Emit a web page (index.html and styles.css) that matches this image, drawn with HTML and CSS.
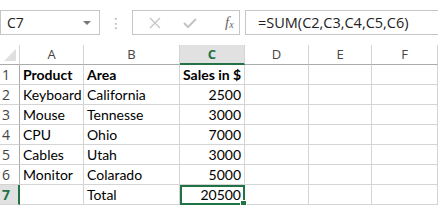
FILE: index.html
```html
<!DOCTYPE html>
<html lang="en">
<head>
<meta charset="UTF-8" />
<title>Sheet</title>
<link rel="stylesheet" href="styles.css">
</head>
<body>

<div class="toolbar">
  <div class="namebox">C7<span class="arrow"></span></div>
  <div class="grip">&#8942;</div>
  <div class="fbuttons">
    <svg class="ico" width="14" height="14" viewBox="0 0 14 14"><path d="M2 2 L12 12 M12 2 L2 12" stroke="#c4c4c4" stroke-width="1.3" fill="none"/></svg>
    <svg class="ico" width="16" height="14" viewBox="0 0 16 14"><path d="M2 7 L6 11 L14 3" stroke="#c4c4c4" stroke-width="2" fill="none"/></svg>
    <span class="fx">f<sub>x</sub></span>
  </div>
  <div class="formula">=SUM(C2,C3,C4,C5,C6)</div>
</div>

<div class="sheet">
  <div class="corner"><span class="tri"></span></div>
  <div class="colhead">A</div>
  <div class="colhead">B</div>
  <div class="colhead active">C</div>
  <div class="colhead">D</div>
  <div class="colhead">E</div>
  <div class="colhead">F</div>

  <div class="rowhead">1</div>
  <div class="cell bold">Product</div>
  <div class="cell bold">Area</div>
  <div class="cell bold">Sales in $</div>
  <div class="cell"></div><div class="cell"></div><div class="cell"></div>

  <div class="rowhead">2</div>
  <div class="cell">Keyboard</div>
  <div class="cell">California</div>
  <div class="cell num">2500</div>
  <div class="cell"></div><div class="cell"></div><div class="cell"></div>

  <div class="rowhead">3</div>
  <div class="cell">Mouse</div>
  <div class="cell">Tennesse</div>
  <div class="cell num">3000</div>
  <div class="cell"></div><div class="cell"></div><div class="cell"></div>

  <div class="rowhead">4</div>
  <div class="cell">CPU</div>
  <div class="cell">Ohio</div>
  <div class="cell num">7000</div>
  <div class="cell"></div><div class="cell"></div><div class="cell"></div>

  <div class="rowhead">5</div>
  <div class="cell">Cables</div>
  <div class="cell">Utah</div>
  <div class="cell num">3000</div>
  <div class="cell"></div><div class="cell"></div><div class="cell"></div>

  <div class="rowhead">6</div>
  <div class="cell">Monitor</div>
  <div class="cell">Colarado</div>
  <div class="cell num">5000</div>
  <div class="cell"></div><div class="cell"></div><div class="cell"></div>

  <div class="rowhead active">7</div>
  <div class="cell"></div>
  <div class="cell">Total</div>
  <div class="cell num selected">20500<span class="handle"></span></div>
  <div class="cell"></div><div class="cell"></div><div class="cell"></div>
</div>

</body>
</html>
```

FILE: styles.css
```css
body {
  margin: 0;
  background: #fff;
  font-family: "Open Sans", "DejaVu Sans", sans-serif;
  overflow: hidden;
}
.toolbar {
  display: flex;
  align-items: stretch;
  height: 25px;
  padding-top: 10px;
  margin-bottom: 10px;
}
.namebox {
  width: 100px;
  border: 1px solid #c6c6c6;
  box-sizing: border-box;
  font-size: 14px;
  color: #222;
  padding-left: 6px;
  display: flex;
  align-items: center;
  position: relative;
}
.arrow {
  position: absolute;
  right: 8px; top: 10px;
  border-left: 4px solid transparent;
  border-right: 4px solid transparent;
  border-top: 4px solid #777;
}
.grip {
  width: 32px;
  color: #b0b0b0;
  font-size: 14px;
  display: flex;
  align-items: center;
  justify-content: center;
}
.fbuttons {
  width: 108px;
  border: 1px solid #c6c6c6;
  box-sizing: border-box;
  display: flex;
  align-items: center;
  padding-left: 15px;
}
.fbuttons .ico { margin-right: 20px; }
.fbuttons .ico:nth-child(2) { margin-right: 27px; }
.fx {
  font-family: "Liberation Serif", serif;
  font-style: italic;
  font-size: 15px;
  color: #666;
}
.fx sub { font-size: 10px; vertical-align: -1px; }
.formula {
  flex: 1;
  margin-left: 5px;
  border: 1px solid #c6c6c6;
  border-right: none;
  box-sizing: border-box;
  font-size: 14.5px;
  color: #222;
  padding-left: 12px;
  display: flex;
  align-items: center;
}
.sheet {
  display: grid;
  grid-template-columns: 20px 64px 96px 65px 64px 63px 66px;
  grid-auto-rows: 20px;
  font-family: "Lato", "Liberation Sans", sans-serif;
  font-size: 14px;
}
.corner {
  border-right: 1px solid #d4d4d4;
  border-bottom: 1px solid #ababab;
  position: relative;
}
.tri {
  position: absolute;
  right: 3px; bottom: 3px;
  border-left: 12px solid transparent;
  border-bottom: 12px solid #dfdfdf;
}
.colhead {
  border-right: 1px solid #d4d4d4;
  border-bottom: 1px solid #ababab;
  font-family: "Open Sans", sans-serif;
  font-size: 13px;
  color: #444;
  text-align: center;
  line-height: 19px;
}
.colhead.active {
  background: #e1e1e1;
  border-bottom: 2px solid #217346;
  color: #217346;
  font-weight: bold;
  line-height: 18px;
}
.rowhead {
  border-right: 1px solid #ababab;
  border-bottom: 1px solid #d4d4d4;
  font-family: "Open Sans", sans-serif;
  font-size: 14px;
  color: #444;
  padding-left: 2px;
  line-height: 20px;
}
.rowhead.active {
  background: #e1e1e1;
  border-right: 2px solid #217346;
  color: #217346;
  font-weight: bold;
}
.cell {
  border-right: 1px solid #d4d4d4;
  border-bottom: 1px solid #d4d4d4;
  padding: 0 3px;
  line-height: 20px;
  white-space: nowrap;
  color: #000;
}
.bold { font-weight: bold; }
.num { text-align: right; }
.selected {
  position: relative;
  outline: 2px solid #217346;
  outline-offset: -2px;
  line-height: 19px;
}
.handle {
  position: absolute;
  right: -3px; bottom: -3px;
  width: 5px; height: 5px;
  background: #217346;
  border: 1px solid #fff;
}
```
